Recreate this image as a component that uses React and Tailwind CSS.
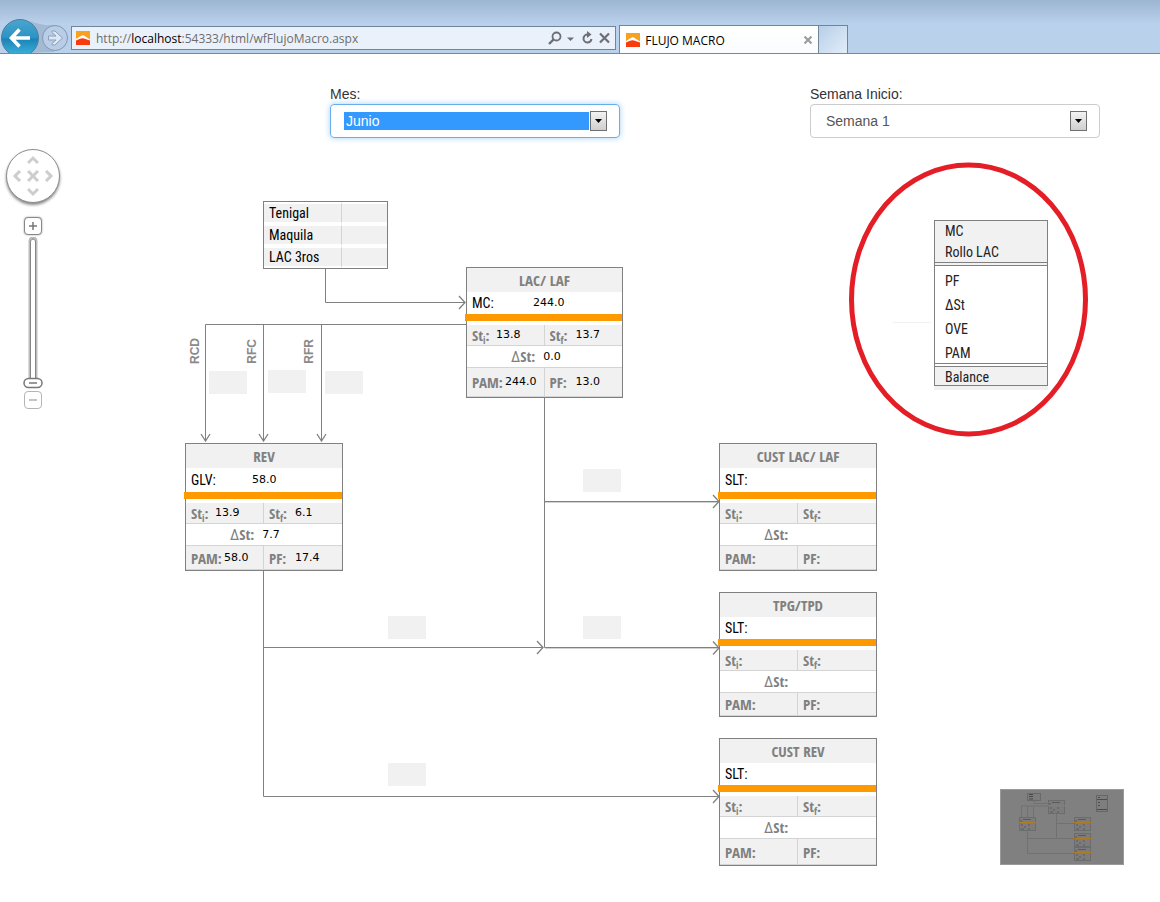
import { useState } from "react";

const narrow =
  "font-['Arial_Narrow','Roboto_Condensed','Liberation_Sans',sans-serif]";
const narrowBold =
  "font-['Arial_Narrow','Open_Sans_Condensed','Roboto_Condensed','Liberation_Sans',sans-serif]";

function SiteIcon() {
  return (
    <svg width="14" height="14" viewBox="0 0 14 14" className="shrink-0" aria-hidden="true">
      <rect width="14" height="14" fill="#f7a11f" />
      <path d="M0 8 L4 5.500 L7 4 L14 8.500 V14 H0 Z" fill="#fff" />
      <path d="M0 9.500 L4 7.800 Q6 6.800 8 7.500 L14 9.500 V14 H0 Z" fill="#f93a0c" />
    </svg>
  );
}

function BrowserBar() {
  return (
    <header className="flex h-[54px] items-end border-b border-[#76889c] bg-linear-to-b from-[#9cb5d0] to-[#bad1ec] to-45% font-['Open_Sans','Noto_Sans',sans-serif]">
      <div className="relative h-[53px] w-[71px] shrink-0 overflow-hidden">
        <svg width="71" height="53" viewBox="0 0 71 53" aria-hidden="true">
          <defs>
            <linearGradient id="back" x1="0" y1="0" x2="0" y2="1">
              <stop offset="0" stopColor="#4aa5cf" />
              <stop offset="0.5" stopColor="#2b93c4" />
              <stop offset="0.52" stopColor="#1b82b5" />
              <stop offset="1" stopColor="#3fb6e0" />
            </linearGradient>
          </defs>
          <path d="M30 21 Q42 26 54 25 V52 Q42 52 32 53 Z" fill="#a3bad4" />
          <circle cx="20" cy="38" r="18.500" fill="url(#back)" stroke="#507c9e" />
          <path d="M30 38 H12 M19.500 29.500 L11.500 38 L19.500 46.500" fill="none" stroke="#fff" strokeWidth="3.600" />
          <circle cx="55" cy="38" r="12.500" fill="#b9cee6" stroke="#8098b4" />
          <path d="M48.500 36 H56 L52 32.500 V31 H55 L62.500 38 L55 45 H52 V43.500 L56 40 H48.500 Z" fill="#dbe7f4" stroke="#8ba1bb" />
        </svg>
        <button aria-label="Back" className="absolute top-[19px] left-0 h-[34px] w-10" />
        <button aria-label="Forward" className="absolute top-[25px] left-[42px] h-[26px] w-[26px]" />
      </div>
      <div className="mb-[3px] flex h-6 w-[47%] items-center gap-1 border border-[#70849a] bg-[#eaf1fa] px-1">
        <SiteIcon />
        <p className="ml-0.5 flex-1 pt-0.5 text-xs leading-5 whitespace-nowrap text-[#6d6d6d]">
          http://<span className="text-black">localhost</span>:54333/html/wfFlujoMacro.aspx
        </p>
        <button aria-label="Search">
          <svg width="30" height="16" viewBox="0 0 30 16" fill="none" stroke="#6d6f75">
            <circle cx="9.500" cy="6.500" r="4" strokeWidth="1.800" />
            <path d="M6.500 9.500 L2 14" strokeWidth="2.400" />
            <path d="M20 7.500 H27 L23.500 11 Z" fill="#6d6f75" stroke="none" />
          </svg>
        </button>
        <button aria-label="Reload">
          <svg width="13" height="16" viewBox="0 0 13 16" fill="none" stroke="#6d6f75" strokeWidth="2">
            <path d="M8 4.500 H6.500 A4 4 0 1 0 10.500 9" />
            <path d="M6 1 L10.500 4.500 L6 8 Z" fill="#6d6f75" stroke="none" />
          </svg>
        </button>
        <button aria-label="Stop">
          <svg width="13" height="16" viewBox="0 0 13 16" stroke="#6d6f75" strokeWidth="2.200">
            <path d="M2 3.500 L11 12.500 M11 3.500 L2 12.500" />
          </svg>
        </button>
      </div>
      <div className="ml-[3px] flex h-7 w-[200px] items-center border border-b-0 border-[#70849a] bg-linear-to-b from-white to-[#fbfcfe] px-1.5 text-xs text-black">
        <SiteIcon />
        <span className="ml-[5px] flex-1 pt-0.5 whitespace-nowrap">FLUJO MACRO</span>
        <button aria-label="Close tab">
          <svg width="8" height="8" viewBox="0 0 8 8" stroke="#9a9a9a" strokeWidth="2">
            <path d="M0.500 0.500 L7.500 7.500 M7.500 0.500 L0.500 7.500" />
          </svg>
        </button>
      </div>
      <button
        aria-label="New tab"
        className="h-7 w-[29px] border border-b-0 border-l-0 border-[#70849a] bg-linear-to-br from-[#b7cfe9] to-[#e2edf8]"
      />
    </header>
  );
}

function Field({ id, label, value, active }) {
  return (
    <div className="font-['Liberation_Sans',sans-serif] text-sm leading-5 text-[#333]">
      <label htmlFor={id} className="block">
        {label}
      </label>
      <div
        className={
          active
            ? "flex h-[34px] items-center rounded border border-[#66afe9] pr-3 pl-[13px] shadow-[0_0_6px_#a5d2f5]"
            : "flex h-[34px] items-center rounded border border-[#ccc] pr-3 pl-[13px]"
        }
      >
        <select
          id={id}
          defaultValue={value}
          className={
            active
              ? "h-[18px] min-w-0 flex-1 appearance-none bg-[#3399ff] pl-0.5 leading-[18px] text-white outline-none"
              : "h-[18px] min-w-0 flex-1 appearance-none bg-white pl-0.5 leading-[18px] text-[#555] outline-none"
          }
        >
          <option>{value}</option>
        </select>
        <span
          aria-hidden="true"
          className="ml-px flex h-5 w-[17px] items-center justify-center border border-[#707070] bg-linear-to-b from-[#f2f2f2] to-[#cfcfcf]"
        >
          <svg width="7" height="4" viewBox="0 0 7 4">
            <path d="M0 0 H7 L3.500 4 Z" fill="#000" />
          </svg>
        </span>
      </div>
    </div>
  );
}

function MapControls() {
  const [zoom, setZoom] = useState(0);
  return (
    <div className="absolute top-[11px] left-[5px] flex w-14 flex-col items-center">
      <div className="grid h-[54px] w-[54px] grid-cols-3 place-items-center rounded-full border border-[#8c8c8c] bg-white p-1 shadow-[0_2px_3px_#888]">
        <span />
        <Pan label="Up" d="M1 8 L6 3 L11 8" />
        <span />
        <Pan label="Left" d="M8 1 L3 6 L8 11" />
        <Pan label="Center" d="M1 1 L11 11 M11 1 L1 11" />
        <Pan label="Right" d="M4 1 L9 6 L4 11" />
        <span />
        <Pan label="Down" d="M1 4 L6 9 L11 4" />
        <span />
      </div>
      <button
        aria-label="Zoom in"
        className="mt-3.5 flex h-[18px] w-[18px] items-center justify-center rounded border border-[#888] bg-white shadow-[0_0_2px_#999]"
      >
        <svg width="8" height="8" viewBox="0 0 8 8" stroke="#777" strokeWidth="1.500">
          <path d="M0 4 H8 M4 0 V8" />
        </svg>
      </button>
      <div className="relative mt-0.5 h-[154px] w-[22px]">
        <svg width="22" height="154" viewBox="0 0 22 154" aria-hidden="true">
          <path d="M8 146 V4 Q8 1 11 1 Q14 1 14 4 V146" fill="#fff" stroke="#bcbcbc" strokeWidth="3" />
          <path d="M8.500 146 V4 Q11 0 13.500 4 V146" fill="#fff" stroke="#858585" />
          <rect x="2" y="141.500" width="18" height="9" rx="4.500" fill="#fff" stroke="#777" strokeWidth="1.500" />
          <path d="M7 146 H15" stroke="#777" strokeWidth="1.500" />
        </svg>
        <input
          type="range"
          aria-label="Zoom"
          value={zoom}
          onChange={(e) => setZoom(e.target.value)}
          className="absolute inset-0 h-full w-full opacity-0 [writing-mode:vertical-lr]"
        />
      </div>
      <button
        aria-label="Zoom out"
        className="flex h-[18px] w-[18px] items-center justify-center rounded border border-[#b5b5b5] bg-white"
      >
        <svg width="8" height="8" viewBox="0 0 8 8" stroke="#b0b0b0" strokeWidth="1.500">
          <path d="M0 4 H8" />
        </svg>
      </button>
    </div>
  );
}

function Pan({ label, d }) {
  return (
    <button aria-label={label}>
      <svg width="12" height="12" viewBox="0 0 12 12" fill="none" stroke="#cdcdcd" strokeWidth="3">
        <path d={d} />
      </svg>
    </button>
  );
}

function Value({ children }) {
  return (
    <span className="font-['DejaVu_Sans',sans-serif] text-[11px] font-normal text-black">
      {children}
    </span>
  );
}

function StockLabel({ sub }) {
  return (
    <span className="w-6">
      St<sub className="text-[10px]">{sub}</sub>:
    </span>
  );
}

function Node({ place, title, source, compact, v = {} }) {
  return (
    <section
      className={`absolute flex flex-col border border-[#808080] bg-white text-[15px] leading-5 font-bold text-[#808080] ${narrowBold} ${place}`}
    >
      <h2 className="flex h-6 items-center justify-center bg-[#f1f1f1]">{title}</h2>
      <div
        className={
          compact
            ? "flex h-[22px] items-center pl-[5px] text-sm font-normal text-black"
            : "flex h-6 items-center pl-[5px] text-sm font-normal text-black"
        }
      >
        <span className={`w-[61px] ${narrow}`}>{source}:</span>
        <Value>{v.main}</Value>
      </div>
      <div className="-ml-0.5 h-[7px] bg-[#ff9900]" />
      <div className="mt-1 grid h-[21px] grid-cols-2 border-b border-[#d4d4d4] bg-[#f1f1f1]">
        <div className="flex items-center border-r border-[#d4d4d4] pl-[5px]">
          <StockLabel sub="i" />
          <Value>{v.sti}</Value>
        </div>
        <div className="flex items-center gap-0.5 pl-[5px]">
          <StockLabel sub="f" />
          <Value>{v.stf}</Value>
        </div>
      </div>
      <div className="flex h-[22px] items-center gap-2 border-b border-[#d4d4d4] pl-[44px]">
        <span>
          <span className={`font-normal ${narrow}`}>Δ</span>St:
        </span>
        <Value>{v.delta}</Value>
      </div>
      <div className="grid flex-1 grid-cols-2 border-b border-[#d4d4d4] bg-[#f1f1f1]">
        <div className="flex items-center border-r border-[#d4d4d4] pl-[5px]">
          <span className="w-[33px]">PAM:</span>
          <Value>{v.pam}</Value>
        </div>
        <div className="flex items-center gap-0.5 pl-[5px]">
          <span className="w-6">PF:</span>
          <Value>{v.pf}</Value>
        </div>
      </div>
    </section>
  );
}

function SourceBox() {
  return (
    <table
      className={`absolute top-[63px] left-[263px] w-[125px] border-separate border-spacing-0 border border-[#808080] bg-white text-sm text-black ${narrow}`}
    >
      <tbody>
        {["Tenigal", "Maquila", "LAC 3ros"].map((name) => (
          <tr key={name} className="leading-[18px]">
            <th className="w-[78px] border-y-2 border-r border-y-white border-r-[#d4d4d4] bg-[#f1f1f1] p-0 pl-[5px] text-left leading-[18px] font-normal whitespace-nowrap">
              {name}
            </th>
            <td className="border-y-2 border-y-white bg-[#f1f1f1] p-0" />
          </tr>
        ))}
      </tbody>
    </table>
  );
}

function Legend() {
  return (
    <div
      className={`absolute top-[82px] left-[934px] w-[114px] border border-[#808080] bg-white text-sm text-[#222] shadow-[0_4px_0_#f1f1f1] ${narrow}`}
    >
      <div className="h-[45px] border-b-4 border-double border-[#808080] bg-[#f1f1f1] pl-[10px] leading-[21px]">
        <p>MC</p>
        <p>Rollo LAC</p>
      </div>
      <div className="h-[101px] border-b-4 border-double border-[#808080] pt-[3px] pl-[10px] leading-6">
        <p>PF</p>
        <p>ΔSt</p>
        <p>OVE</p>
        <p>PAM</p>
      </div>
      <p className="h-[18px] bg-[#f1f1f1] pl-[10px] leading-5">Balance</p>
    </div>
  );
}

const edges = [
  "M325.500 269 V302.500 H465",
  "M466 324.500 H205.500 V441",
  "M263.500 324.500 V441",
  "M321.500 324.500 V441",
  "M544.500 398 V647.500",
  "M544.500 501.500 H718",
  "M263.500 571 V796.500 H718",
  "M263.500 647.500 H543",
  "M544.500 647.500 H718",
];

const arrows = [
  "M459 296 L465 302.500 L459 309",
  "M201 434 L205.500 441 L210 434",
  "M259 434 L263.500 441 L268 434",
  "M317 434 L321.500 441 L326 434",
  "M713 495 L719 501.500 L713 508",
  "M537 641 L543 647.500 L537 654",
  "M713 641.500 L719 648 L713 654.500",
  "M713 790 L719 796.500 L713 803",
];

const slots = [
  [209, 371],
  [268, 370],
  [325, 371],
  [583, 469],
  [388, 616],
  [583, 616],
  [388, 763],
];

function Connections() {
  return (
    <svg
      width="1160"
      height="764"
      viewBox="0 138 1160 764"
      fill="none"
      stroke="#808080"
      className="absolute top-0 left-0"
      aria-hidden="true"
    >
      {slots.map(([x, y]) => (
        <rect key={`${x}-${y}`} x={x} y={y} width="38" height="23" fill="#f1f1f1" stroke="none" />
      ))}
      <path d="M545 648.500 H718 M545 502.500 H718" stroke="#d2d2d2" />
      {edges.map((d) => (
        <path key={d} d={d} />
      ))}
      {arrows.map((d) => (
        <path key={d} d={d} strokeWidth="1.300" />
      ))}
      <path d="M893 322.500 H931" stroke="#f0f0f0" />
      <ellipse cx="968.500" cy="299.500" rx="117" ry="134.500" stroke="#e41e26" strokeWidth="5" />
    </svg>
  );
}

function EdgeLabel({ place, children }) {
  return (
    <span
      className={`absolute rotate-180 font-['Liberation_Sans',sans-serif] text-xs leading-3 font-bold text-[#8a8a8a] [writing-mode:vertical-rl] ${place}`}
    >
      {children}
    </span>
  );
}

const miniNodes = [
  [48, 11],
  [19, 28],
  [74, 28],
  [74, 44],
  [74, 58],
];

function Minimap() {
  return (
    <svg
      width="124"
      height="76"
      viewBox="0 0 124 76"
      className="absolute top-[651px] left-[1000px]"
      role="img"
      aria-label="Overview"
    >
      <rect x="0.500" y="0.500" width="123" height="75" fill="#808080" stroke="#999" />
      <g fill="none" stroke="#717171">
        <path d="M34 11 V14.500 H48 M48 17 H21.500 V28 M27.500 17 V28 M33.500 17 V28" />
        <path d="M56.500 24 V49.500 M56.500 34.500 H74 M27.500 41 V64.500 H74 M27.500 49.500 H74" />
      </g>
      <rect x="27.500" y="4.500" width="13" height="7" fill="#7c7c7c" stroke="#6a6a6a" />
      <path d="M29 5.500 H33 M29 7.500 H33 M29 10 H33" stroke="#4a4a4a" />
      {miniNodes.map(([x, y]) => (
        <g key={`${x}-${y}`}>
          <rect x={x + 0.5} y={y + 0.5} width="16" height="13" fill="#7c7c7c" stroke="#6c6c6c" />
          <path
            d={`M${x + 4} ${y + 2.5} h8 M${x + 1} ${y + 4} h2 M${x + 2} ${y + 8} h2 m5 0 h2 M${x + 5} ${y + 10} h2 M${x + 2} ${y + 12} h3 m4 0 h2`}
            stroke="#5a5a5a"
          />
          <path d={`M${x} ${y + 5.5} h17`} stroke="#b17a25" />
        </g>
      ))}
      <rect x="96.500" y="6.500" width="11" height="16" fill="#7e7e7e" stroke="#666" />
      <path d="M97 10.500 H107 M97 20.500 H107 M98 8.500 H100 M98 13.500 H100 M98 16.500 H100" stroke="#4c4c4c" />
    </svg>
  );
}

export default function App() {
  return (
    <div className="min-h-screen bg-white">
      <BrowserBar />
      <form className="grid grid-cols-2 gap-x-[190px] pt-[30px] pr-[60px] pl-[330px]">
        <Field id="mes" label="Mes:" value="Junio" active />
        <Field id="semana" label="Semana Inicio:" value="Semana 1" />
      </form>
      <main className="relative min-h-[764px] overflow-hidden">
        <Connections />
        <MapControls />
        <SourceBox />
        <EdgeLabel place="top-[200px] left-[189px]">RCD</EdgeLabel>
        <EdgeLabel place="top-[201px] left-[246px]">RFC</EdgeLabel>
        <EdgeLabel place="top-[201px] left-[303px]">RFR</EdgeLabel>
        <Node
          place="top-[129px] left-[466px] h-[131px] w-[157px]"
          title="LAC/ LAF"
          source="MC"
          compact
          v={{ main: "244.0", sti: "13.8", stf: "13.7", delta: "0.0", pam: "244.0", pf: "13.0" }}
        />
        <Node
          place="top-[305px] left-[185px] h-[128px] w-[158px]"
          title="REV"
          source="GLV"
          v={{ main: "58.0", sti: "13.9", stf: "6.1", delta: "7.7", pam: "58.0", pf: "17.4" }}
        />
        <Node place="top-[305px] left-[719px] h-[128px] w-[158px]" title="CUST LAC/ LAF" source="SLT" />
        <Node place="top-[454px] left-[719px] h-[125px] w-[158px]" title="TPG/TPD" source="SLT" compact />
        <Node place="top-[600px] left-[719px] h-[128px] w-[158px]" title="CUST REV" source="SLT" compact />
        <Legend />
        <Minimap />
      </main>
    </div>
  );
}
